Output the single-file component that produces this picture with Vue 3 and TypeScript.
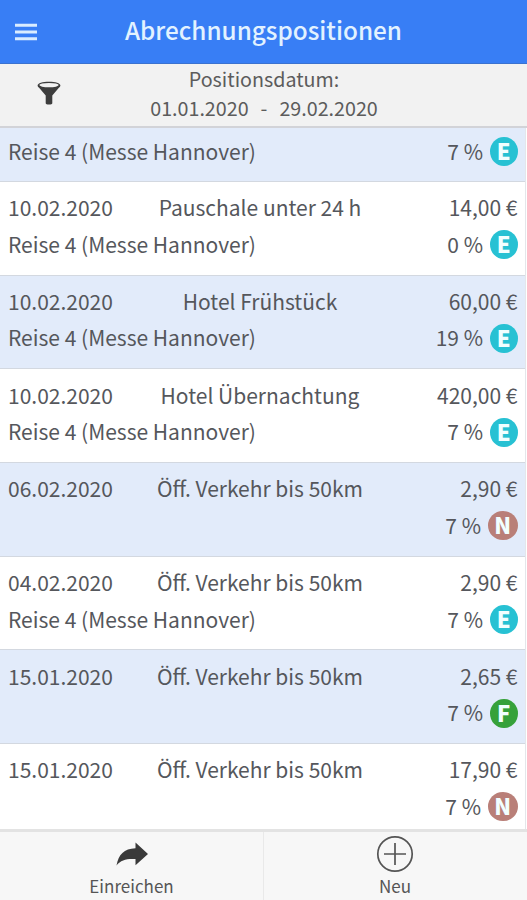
<script setup lang="ts">
type Status = 'E' | 'N' | 'F'

interface Position {
  date: string
  title: string
  amount: string
  trip: string
  tax: string
  status: Status
}

const trip = 'Reise 4 (Messe Hannover)'

const positions: Position[] = [
  { date: '10.02.2020', title: 'Pauschale unter 24 h', amount: '14,00 €', trip, tax: '0 %', status: 'E' },
  { date: '10.02.2020', title: 'Hotel Frühstück', amount: '60,00 €', trip, tax: '19 %', status: 'E' },
  { date: '10.02.2020', title: 'Hotel Übernachtung', amount: '420,00 €', trip, tax: '7 %', status: 'E' },
  { date: '06.02.2020', title: 'Öff. Verkehr bis 50km', amount: '2,90 €', trip: '', tax: '7 %', status: 'N' },
  { date: '04.02.2020', title: 'Öff. Verkehr bis 50km', amount: '2,90 €', trip, tax: '7 %', status: 'E' },
  { date: '15.01.2020', title: 'Öff. Verkehr bis 50km', amount: '2,65 €', trip: '', tax: '7 %', status: 'F' },
  { date: '15.01.2020', title: 'Öff. Verkehr bis 50km', amount: '17,90 €', trip: '', tax: '7 %', status: 'N' },
]
</script>

<template>
  <div class="app">
    <header class="bar">
      <svg class="menu" viewBox="0 0 24 18" aria-hidden="true">
        <path d="M1 2.2H23M1 9H23M1 15.8H23" />
      </svg>
      <h1>Abrechnungspositionen</h1>
    </header>

    <section class="filter">
      <svg class="funnel" viewBox="0 0 24 24" aria-hidden="true">
        <path d="M.6 4.400C.6 2.300 5.500.7 12 .7s11.400 1.600 11.400 3.700c0 .8-.6 1.500-1.500 2.300L15.300 14.500v7.700c0 .8-1.300 1.400-3.300 1.400s-3.300-.6-3.300-1.400v-7.700L2.100 6.700C1.200 5.900.6 5.200.6 4.400z" />
        <ellipse cx="12" cy="4.100" rx="9.700" ry="2.200" />
      </svg>
      <div class="range">
        <span class="caption">Positionsdatum:</span>
        <span class="dates"><span>01.01.2020</span><span>-</span><span>29.02.2020</span></span>
      </div>
    </section>

    <main class="list">
      <article class="row clipped">
        <div class="line second">
          <span>{{ trip }}</span>
          <span class="tax">7 %<b class="badge E">E</b></span>
        </div>
      </article>
      <article v-for="(p, i) in positions" :key="i" class="row">
        <div class="line first">
          <span class="date">{{ p.date }}</span>
          <span class="title">{{ p.title }}</span>
          <span class="amount">{{ p.amount }}</span>
        </div>
        <div class="line second">
          <span>{{ p.trip }}</span>
          <span class="tax">{{ p.tax }}<b class="badge" :class="p.status">{{ p.status }}</b></span>
        </div>
      </article>
    </main>

    <footer class="tabs">
      <button class="tab" type="button">
        <svg class="share" viewBox="0 0 32 24" aria-hidden="true">
          <path d="M.5 23.500C2.500 12.500 8 6.500 19.500 6.200V.5L32 12 19.500 23.300V17C11 16.500 5 17.500.5 23.500z" />
        </svg>
        <span>Einreichen</span>
      </button>
      <button class="tab" type="button">
        <svg class="plus" viewBox="0 0 38 38" aria-hidden="true">
          <circle cx="19" cy="19" r="17.200" />
          <path d="M19 8v22M8 19h22" />
        </svg>
        <span>Neu</span>
      </button>
    </footer>
  </div>
</template>

<style>
body {
  margin: 0;
}
</style>

<style scoped>
.app {
  display: flex;
  flex-direction: column;
  width: 527px;
  height: 900px;
  overflow: hidden;
  background: #fff;
  color: #55575c;
  font-family: "Noto Sans CJK JP", "Noto Sans", sans-serif;
  font-size: 21px;
  white-space: nowrap;
}

.bar {
  display: grid;
  grid-template-columns: 54px 1fr 54px;
  align-items: center;
  box-sizing: border-box;
  flex: 0 0 64px;
  padding-bottom: 3px;
  border-bottom: 1px solid #3b72cf;
  background: #387ef5;
}

.menu {
  width: 24px;
  height: 18px;
  margin-left: 14px;
  margin-top: 4px;
  fill: none;
  stroke: #d9ecff;
  stroke-width: 2.9;
}

h1 {
  margin: 0;
  color: #e2f2ff;
  font-size: 24.300px;
  font-weight: 500;
  line-height: 34px;
  text-align: center;
}

.filter {
  display: grid;
  grid-template-columns: 98px 1fr 98px;
  box-sizing: border-box;
  flex: 0 0 64px;
  border-bottom: 2px solid #d2d3d8;
  background: #f2f2f2;
}

.funnel {
  width: 24px;
  height: 24px;
  margin: 16.500px 0 0 36.500px;
  fill: #3d3d3d;
}

.funnel ellipse {
  fill: #f2f2f2;
}

.range {
  display: flex;
  flex-direction: column;
  align-items: center;
  padding-left: 1px;
  color: #5c5c5c;
  font-size: 19.700px;
  line-height: 29px;
}

.dates {
  display: flex;
  gap: 12px;
}

.list {
  display: flex;
  flex: 0 0 701px;
  flex-direction: column;
  box-sizing: border-box;
  width: 526px;
  overflow: hidden;
  border-right: 1px solid #e4e6ea;
}

.row {
  box-sizing: border-box;
  flex: 0 0 93.700px;
  padding: 7px 7.500px 0 8px;
  border-bottom: 1px solid #d3d8e0;
}

.row:nth-child(odd) {
  background: #e2ebfa;
}

.row.clipped {
  flex-basis: 54px;
  padding-top: 4.500px;
}

.line {
  display: grid;
  align-items: center;
  height: 36.500px;
  line-height: 36px;
}

.first {
  grid-template-columns: 125px 254px 1fr;
}

.second {
  grid-template-columns: 1fr auto;
}

.title {
  text-align: center;
}

.amount {
  text-align: right;
}

.tax {
  display: flex;
  align-items: center;
  justify-content: flex-end;
}

.badge {
  box-sizing: border-box;
  width: 27.500px;
  height: 29px;
  margin-top: 2px;
  margin-left: 7px;
  border-radius: 50%;
  color: #f2ffff;
  font-size: 22px;
  font-weight: 900;
  line-height: 27px;
  text-align: center;
}

.E {
  background: #27c1d3;
}

.N {
  width: 29.500px;
  background: #b97f78;
}

.F {
  background: #36a13a;
}

.tabs {
  display: grid;
  grid-template-columns: 263px 1fr;
  box-sizing: border-box;
  flex: 0 0 72px;
  border-top: 3px solid #e3e3e3;
  background: #f7f7f7;
}

.tab {
  display: flex;
  flex-direction: column;
  align-items: center;
  justify-content: space-between;
  padding: 3px 0 3px;
  border: 0;
  background: none;
  color: #555;
  font: inherit;
  font-size: 17px;
  line-height: 26px;
}

.tab + .tab {
  padding-right: 1px;
  border-left: 1px solid #e9e9e9;
}

.share {
  width: 32px;
  height: 24px;
  margin-top: 7px;
  margin-left: 1px;
  fill: #3a3a3a;
}

.plus {
  width: 38px;
  height: 38px;
  fill: none;
  stroke: #555;
  stroke-width: 1.700;
}
</style>
